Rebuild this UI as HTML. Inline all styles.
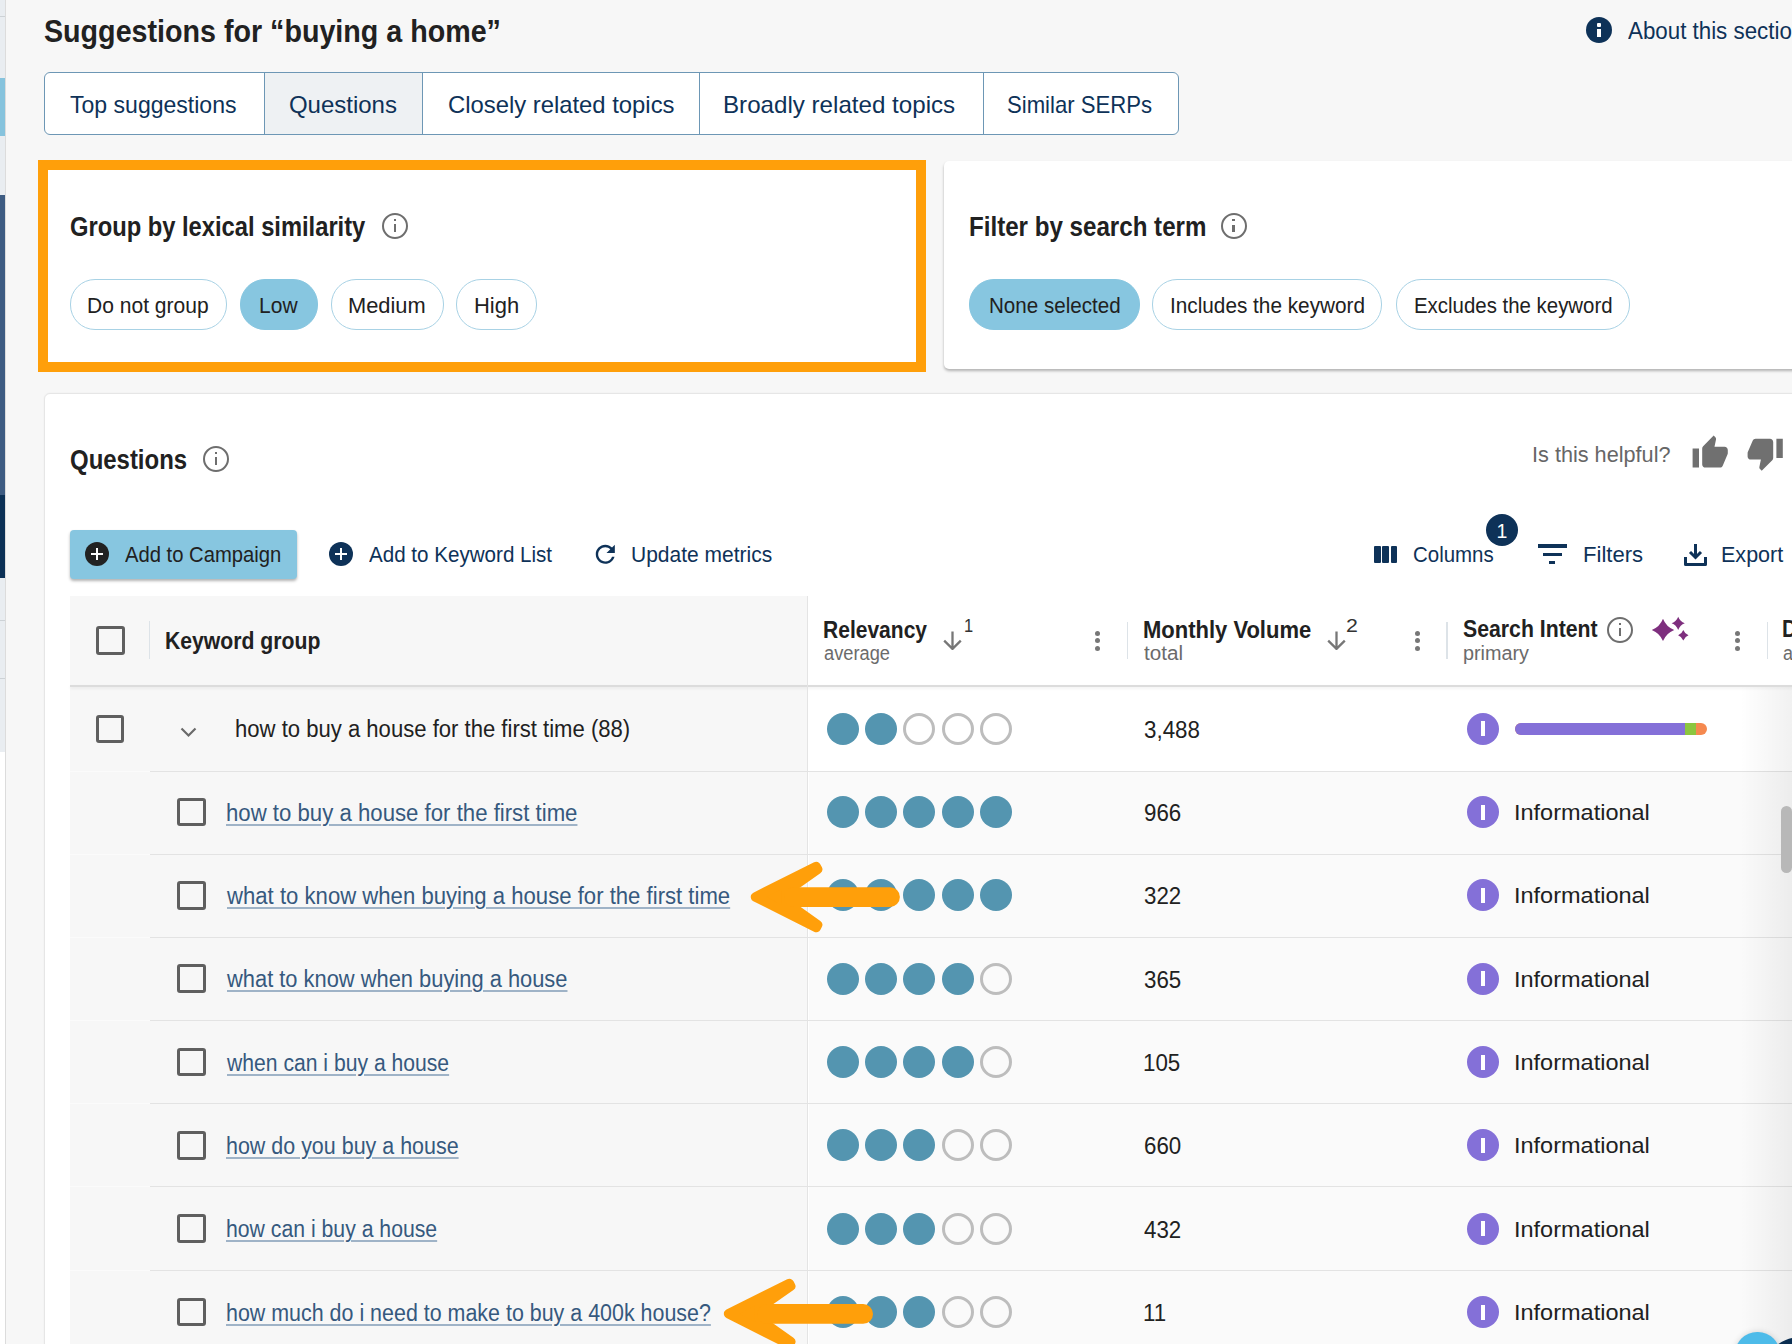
<!DOCTYPE html><html><head><meta charset="utf-8"><style>
*{box-sizing:border-box;margin:0;padding:0}
html,body{width:1792px;height:1344px;overflow:hidden}
body{background:#f7f7f7;position:relative;font-family:"Liberation Sans",sans-serif;color:#212121}
.a{position:absolute;white-space:nowrap;line-height:1;transform-origin:0 0}
.r{position:absolute}
.seg{position:absolute;left:0;width:5px}
.pill{position:absolute;height:51px;border:1.2px solid #a8d2e5;border-radius:25px;background:#fff}
.pill.on{background:#87c6e0;border-color:#87c6e0}
.info{position:absolute;width:26px;height:26px;border:2.3px solid #6e6e6e;border-radius:50%}
.info:before{content:"";position:absolute;left:9.9px;top:9.4px;width:2.4px;height:7.9px;background:#6e6e6e}
.info:after{content:"";position:absolute;left:9.9px;top:3.8px;width:2.4px;height:2.5px;background:#6e6e6e}
.cb{position:absolute;width:29px;height:29px;border:3px solid #5f5f5f;border-radius:3px}
.dot{position:absolute;width:32px;height:32px;border-radius:50%;background:#5495b0}
.dot.e{background:transparent;border:3px solid #bdbdbd}
.pi{position:absolute;width:32px;height:32px;border-radius:50%;background:#8470d8}
.pi:after{content:"";position:absolute;left:13.8px;top:8.6px;width:4.4px;height:15px;background:#fff}
.keb{position:absolute;width:5px;height:5px;border-radius:50%;background:#777}
.sep{position:absolute;width:1.5px;background:#dde3e8}
</style></head><body>
<div class="r" style="left:0;top:0;width:5px;height:1344px;background:#fff"></div>
<div class="seg" style="top:0;height:752px;background:#e9edf1"></div>
<div class="seg" style="top:16px;height:1px;background:#cdd2d6"></div>
<div class="seg" style="top:620px;height:1px;background:#cdd2d6"></div>
<div class="seg" style="top:678px;height:1px;background:#cdd2d6"></div>
<div class="seg" style="top:78px;height:58px;background:#86c3dd"></div>
<div class="seg" style="top:195px;height:300px;background:#3e5c82"></div>
<div class="seg" style="top:495px;height:83px;background:#0c3156"></div>
<div class="r" style="left:5px;top:0;width:1px;height:1344px;background:#dcdcdc"></div>
<div class="r" style="left:1585.8px;top:16.8px;width:26.4px;height:26.4px;border-radius:50%;background:#0e3258"></div>
<div class="r" style="left:1597.3px;top:23.4px;width:3.6px;height:3.2px;background:#fff;border-radius:1px"></div>
<div class="r" style="left:1597.3px;top:29px;width:3.6px;height:7.8px;background:#fff"></div>
<div class="r" style="left:44px;top:72px;width:1135px;height:63px;border:1.3px solid #6d97b5;border-radius:6px;background:#fff;overflow:hidden"><div class="r" style="left:218.5px;top:0;width:159.5px;height:62px;background:#eef1f3;border-left:1.3px solid #6d97b5;border-right:1.3px solid #6d97b5"></div><div class="r" style="left:654px;top:0;width:1.3px;height:62px;background:#6d97b5"></div><div class="r" style="left:938px;top:0;width:1.3px;height:62px;background:#6d97b5"></div></div>
<div class="r" style="left:44px;top:161px;width:878px;height:208px;background:#fff;border-radius:4px"></div>
<div class="r" style="left:38px;top:160px;width:888px;height:212px;border:10px solid #ff9f0a"></div>
<div class="r" style="left:944px;top:161px;width:900px;height:208px;background:#fff;border-radius:5px;box-shadow:0 2px 3px rgba(0,0,0,0.28)"></div>
<div class="pill" style="left:70.3px;top:278.8px;width:156.3px"></div>
<div class="pill on" style="left:240px;top:278.8px;width:77.8px"></div>
<div class="pill" style="left:331.2px;top:278.8px;width:112.4px"></div>
<div class="pill" style="left:456.2px;top:278.8px;width:80.4px"></div>
<div class="pill on" style="left:969.1px;top:278.8px;width:170.8px"></div>
<div class="pill" style="left:1152.4px;top:278.8px;width:230.0px"></div>
<div class="pill" style="left:1396.4px;top:278.8px;width:233.4px"></div>
<div class="r" style="left:43.5px;top:393.4px;width:1800px;height:1000px;background:#fff;border-radius:6px;border:1px solid #e6e6e6;box-shadow:0 0 2px rgba(0,0,0,0.05)"></div>
<div class="info" style="left:382px;top:213px"></div>
<div class="info" style="left:1220.6px;top:213.2px"></div>
<div class="info" style="left:203px;top:446px"></div>
<div class="info" style="left:1607px;top:617px"></div>
<svg class="r" style="left:1691px;top:434.4px" width="38.4" height="38.4" viewBox="0 0 24 24"><path fill="#707070" d="M1 21h4V9H1v12zm22-11c0-1.1-.9-2-2-2h-6.31l.95-4.57.03-.32c0-.41-.17-.79-.44-1.06L14.17 1 7.59 7.59C7.22 7.95 7 8.45 7 9v10c0 1.1.9 2 2 2h9c.83 0 1.54-.5 1.84-1.22l3.02-7.05c.09-.23.14-.47.14-.73v-2z"/></svg>
<svg class="r" style="left:1746px;top:434.2px" width="38.4" height="38.4" viewBox="0 0 24 24"><path fill="#707070" d="M15 3H6c-.83 0-1.54.5-1.84 1.22l-3.02 7.05c-.09.23-.14.47-.14.73v2c0 1.1.9 2 2 2h6.31l-.95 4.57-.03.32c0 .41.17.79.44 1.06L9.83 23l6.59-6.59c.36-.36.58-.86.58-1.41V5c0-1.1-.9-2-2-2zm4 0v12h4V3h-4z"/></svg>
<div class="r" style="left:70.3px;top:530.3px;width:226.3px;height:48.7px;background:#87c6e0;border-radius:4px;box-shadow:0 2px 3px rgba(0,0,0,0.3)"></div>
<div class="r" style="left:84.9px;top:542.3px;width:24px;height:24px;border-radius:50%;background:#222"></div>
<div class="r" style="left:90.9px;top:553.0999999999999px;width:12px;height:2.4px;background:#fff"></div>
<div class="r" style="left:95.7px;top:548.3px;width:2.4px;height:12px;background:#fff"></div>
<div class="r" style="left:329.1px;top:542.3px;width:24px;height:24px;border-radius:50%;background:#0e3258"></div>
<div class="r" style="left:335.1px;top:553.0999999999999px;width:12px;height:2.4px;background:#fff"></div>
<div class="r" style="left:339.90000000000003px;top:548.3px;width:2.4px;height:12px;background:#fff"></div>
<svg class="r" style="left:591px;top:539.5px" width="28.6" height="28.6" viewBox="0 0 24 24"><path fill="#0e3258" d="M17.65 6.35C16.2 4.9 14.21 4 12 4c-4.42 0-7.99 3.58-7.99 8s3.57 8 7.99 8c3.73 0 6.84-2.55 7.73-6h-2.08c-.82 2.33-3.04 4-5.65 4-3.31 0-6-2.69-6-6s2.69-6 6-6c1.66 0 3.14.69 4.22 1.78L13 11h7V4l-2.35 2.35z"/></svg>
<div class="r" style="left:1374px;top:546px;width:6.6px;height:17px;background:#0e3258;border-radius:1px"></div>
<div class="r" style="left:1382.3px;top:546px;width:6.6px;height:17px;background:#0e3258;border-radius:1px"></div>
<div class="r" style="left:1390.6px;top:546px;width:6.6px;height:17px;background:#0e3258;border-radius:1px"></div>
<div class="r" style="left:1486.2px;top:513.8px;width:32px;height:32px;border-radius:50%;background:#0e3258"></div>
<div class="r" style="left:1538px;top:544.3px;width:29px;height:3.4px;background:#0e3258"></div>
<div class="r" style="left:1542.5px;top:552.7px;width:19.5px;height:3.4px;background:#0e3258"></div>
<div class="r" style="left:1549px;top:560.7px;width:6.4px;height:3.4px;background:#0e3258"></div>
<svg class="r" style="left:1684px;top:542.5px" width="23" height="23" viewBox="0 0 23 23"><path d="M11.5 1v13M6 9l5.5 5.5L17 9" stroke="#0e3258" stroke-width="3" fill="none"/><path d="M1.5 14v7.5h20V14" stroke="#0e3258" stroke-width="3" fill="none" stroke-linejoin="round"/></svg>
<div class="r" style="left:70px;top:596px;width:737.5px;height:748px;background:#f7f7f7"></div>
<div class="r" style="left:808.5px;top:771.4px;width:990px;height:573px;background:#fafafa"></div>
<div class="r" style="left:70px;top:685px;width:1730px;height:2.2px;background:#dcdcdc;box-shadow:0 1.5px 3px rgba(0,0,0,0.07)"></div>
<div class="r" style="left:807px;top:596px;width:1.3px;height:748px;background:#e4e4e4"></div>
<div class="cb" style="left:95.6px;top:626px"></div>
<div class="sep" style="left:148.5px;top:621px;height:38px"></div>
<div class="sep" style="left:1126.6px;top:621.5px;height:37px"></div>
<div class="sep" style="left:1446.4px;top:621.5px;height:37px"></div>
<div class="sep" style="left:1766.6px;top:621.5px;height:37px"></div>
<div class="keb" style="left:1094.9px;top:630.7px"></div>
<div class="keb" style="left:1094.9px;top:638.2px"></div>
<div class="keb" style="left:1094.9px;top:645.6px"></div>
<div class="keb" style="left:1414.8px;top:630.7px"></div>
<div class="keb" style="left:1414.8px;top:638.2px"></div>
<div class="keb" style="left:1414.8px;top:645.6px"></div>
<div class="keb" style="left:1735.1px;top:630.7px"></div>
<div class="keb" style="left:1735.1px;top:638.2px"></div>
<div class="keb" style="left:1735.1px;top:645.6px"></div>
<svg class="r" style="left:943px;top:631px" width="19" height="19" viewBox="0 0 19 19"><path d="M9.5 0.5V17.5M1.2 9.6l8.3 8.3 8.3-8.3" stroke="#777" stroke-width="2.3" fill="none"/></svg>
<svg class="r" style="left:1327px;top:630.8px" width="19" height="19" viewBox="0 0 19 19"><path d="M9.5 0.5V17.5M1.2 9.6l8.3 8.3 8.3-8.3" stroke="#777" stroke-width="2.3" fill="none"/></svg>
<svg class="r" style="left:0;top:0" width="1792" height="1344"><path fill="#7e2f7e" d="M1663 618.6999999999999Q1666.136 626.764 1674.2 629.9Q1666.136 633.036 1663 641.1Q1659.864 633.036 1651.8 629.9Q1659.864 626.764 1663 618.6999999999999ZM1678.2 616.6999999999999Q1680.048 621.452 1684.8 623.3Q1680.048 625.1479999999999 1678.2 629.9Q1676.352 625.1479999999999 1671.6000000000001 623.3Q1676.352 621.452 1678.2 616.6999999999999ZM1683.3 630.0999999999999Q1684.7559999999999 633.8439999999999 1688.5 635.3Q1684.7559999999999 636.756 1683.3 640.5Q1681.844 636.756 1678.1 635.3Q1681.844 633.8439999999999 1683.3 630.0999999999999Z"/></svg>
<div class="cb" style="left:95.9px;top:714.5px;width:28.5px;height:28.5px"></div>
<svg class="r" style="left:180px;top:726px" width="17" height="12" viewBox="0 0 17 12"><path d="M1.5 2.5l7 7 7-7" stroke="#6a6a6a" stroke-width="2.2" fill="none"/></svg>
<div class="r" style="left:150px;top:771px;width:1650px;height:1.2px;background:#e3e3e3"></div>
<div class="r" style="left:70px;top:771px;width:80px;height:1.2px;background:#fbfbfb"></div>
<div class="dot" style="left:827.0px;top:712.8px"></div>
<div class="dot" style="left:865.1px;top:712.8px"></div>
<div class="dot e" style="left:903.0px;top:712.8px"></div>
<div class="dot e" style="left:942.1px;top:712.8px"></div>
<div class="dot e" style="left:980.1px;top:712.8px"></div>
<div class="pi" style="left:1467.1px;top:712.8px"></div>
<div class="dot" style="left:827.0px;top:796.0px"></div>
<div class="dot" style="left:865.1px;top:796.0px"></div>
<div class="dot" style="left:903.0px;top:796.0px"></div>
<div class="dot" style="left:942.1px;top:796.0px"></div>
<div class="dot" style="left:980.1px;top:796.0px"></div>
<div class="pi" style="left:1467.1px;top:796.0px"></div>
<div class="cb" style="left:177px;top:797.7px;width:28.6px;height:28.6px"></div>
<div class="r" style="left:150px;top:854.0px;width:1650px;height:1px;background:#e3e3e3"></div>
<div class="r" style="left:70px;top:854.0px;width:80px;height:1px;background:#fbfbfb"></div>
<div class="dot" style="left:827.0px;top:879.3px"></div>
<div class="dot" style="left:865.1px;top:879.3px"></div>
<div class="dot" style="left:903.0px;top:879.3px"></div>
<div class="dot" style="left:942.1px;top:879.3px"></div>
<div class="dot" style="left:980.1px;top:879.3px"></div>
<div class="pi" style="left:1467.1px;top:879.3px"></div>
<div class="cb" style="left:177px;top:881.0px;width:28.6px;height:28.6px"></div>
<div class="r" style="left:150px;top:937.0px;width:1650px;height:1px;background:#e3e3e3"></div>
<div class="r" style="left:70px;top:937.0px;width:80px;height:1px;background:#fbfbfb"></div>
<div class="dot" style="left:827.0px;top:962.7px"></div>
<div class="dot" style="left:865.1px;top:962.7px"></div>
<div class="dot" style="left:903.0px;top:962.7px"></div>
<div class="dot" style="left:942.1px;top:962.7px"></div>
<div class="dot e" style="left:980.1px;top:962.7px"></div>
<div class="pi" style="left:1467.1px;top:962.7px"></div>
<div class="cb" style="left:177px;top:964.4px;width:28.6px;height:28.6px"></div>
<div class="r" style="left:150px;top:1020.0px;width:1650px;height:1px;background:#e3e3e3"></div>
<div class="r" style="left:70px;top:1020.0px;width:80px;height:1px;background:#fbfbfb"></div>
<div class="dot" style="left:827.0px;top:1046.0px"></div>
<div class="dot" style="left:865.1px;top:1046.0px"></div>
<div class="dot" style="left:903.0px;top:1046.0px"></div>
<div class="dot" style="left:942.1px;top:1046.0px"></div>
<div class="dot e" style="left:980.1px;top:1046.0px"></div>
<div class="pi" style="left:1467.1px;top:1046.0px"></div>
<div class="cb" style="left:177px;top:1047.7px;width:28.6px;height:28.6px"></div>
<div class="r" style="left:150px;top:1103.0px;width:1650px;height:1px;background:#e3e3e3"></div>
<div class="r" style="left:70px;top:1103.0px;width:80px;height:1px;background:#fbfbfb"></div>
<div class="dot" style="left:827.0px;top:1129.3px"></div>
<div class="dot" style="left:865.1px;top:1129.3px"></div>
<div class="dot" style="left:903.0px;top:1129.3px"></div>
<div class="dot e" style="left:942.1px;top:1129.3px"></div>
<div class="dot e" style="left:980.1px;top:1129.3px"></div>
<div class="pi" style="left:1467.1px;top:1129.3px"></div>
<div class="cb" style="left:177px;top:1131.0px;width:28.6px;height:28.6px"></div>
<div class="r" style="left:150px;top:1186.0px;width:1650px;height:1px;background:#e3e3e3"></div>
<div class="r" style="left:70px;top:1186.0px;width:80px;height:1px;background:#fbfbfb"></div>
<div class="dot" style="left:827.0px;top:1212.7px"></div>
<div class="dot" style="left:865.1px;top:1212.7px"></div>
<div class="dot" style="left:903.0px;top:1212.7px"></div>
<div class="dot e" style="left:942.1px;top:1212.7px"></div>
<div class="dot e" style="left:980.1px;top:1212.7px"></div>
<div class="pi" style="left:1467.1px;top:1212.7px"></div>
<div class="cb" style="left:177px;top:1214.4px;width:28.6px;height:28.6px"></div>
<div class="r" style="left:150px;top:1270.0px;width:1650px;height:1px;background:#e3e3e3"></div>
<div class="r" style="left:70px;top:1270.0px;width:80px;height:1px;background:#fbfbfb"></div>
<div class="dot" style="left:827.0px;top:1296.0px"></div>
<div class="dot" style="left:865.1px;top:1296.0px"></div>
<div class="dot" style="left:903.0px;top:1296.0px"></div>
<div class="dot e" style="left:942.1px;top:1296.0px"></div>
<div class="dot e" style="left:980.1px;top:1296.0px"></div>
<div class="pi" style="left:1467.1px;top:1296.0px"></div>
<div class="cb" style="left:177px;top:1297.7px;width:28.6px;height:28.6px"></div>
<div class="r" style="left:150px;top:1353.0px;width:1650px;height:1px;background:#e3e3e3"></div>
<div class="r" style="left:70px;top:1353.0px;width:80px;height:1px;background:#fbfbfb"></div>
<div class="r" style="left:1515px;top:723px;width:192px;height:12px;border-radius:6px;overflow:hidden;background:#f5894f"><div class="r" style="left:0;top:0;width:170px;height:12px;background:#8470d8"></div><div class="r" style="left:170px;top:0;width:11px;height:12px;background:#8cc63f"></div></div>
<div class="r" style="left:1740px;top:687px;width:52px;height:657px;background:linear-gradient(to right,rgba(0,0,0,0),rgba(0,0,0,0.055))"></div>
<div class="r" style="left:1781px;top:805.5px;width:11px;height:67px;border-radius:5.5px;background:#b8b8b8"></div>
<div class="r" style="left:1735.3px;top:1331.8px;width:44.4px;height:44.4px;border-radius:50%;background:#4dbbe9;box-shadow:0 0 6px rgba(0,0,0,0.15)"></div>
<div class="r" style="left:1761.5px;top:1336.5px;width:77px;height:77px;border-radius:50%;background:#0a2d50"></div>
<div class="a" style="left:44.10px;top:15.00px;font-size:32px;font-weight:bold;color:#212121;transform:scaleX(0.8955);">Suggestions for “buying a home”</div>
<div class="a" style="left:1628.20px;top:20.00px;font-size:23.5px;font-weight:normal;color:#0e3258;transform:scaleX(0.9500);">About this section</div>
<div class="a" style="left:70.24px;top:93.00px;font-size:24px;font-weight:normal;color:#0e3258;transform:scaleX(0.9599);">Top suggestions</div>
<div class="a" style="left:288.90px;top:93.00px;font-size:24px;font-weight:normal;color:#0e3258;">Questions</div>
<div class="a" style="left:447.61px;top:93.00px;font-size:24px;font-weight:normal;color:#0e3258;transform:scaleX(0.9929);">Closely related topics</div>
<div class="a" style="left:723.49px;top:93.00px;font-size:24px;font-weight:normal;color:#0e3258;transform:scaleX(1.0061);">Broadly related topics</div>
<div class="a" style="left:1006.88px;top:93.00px;font-size:24px;font-weight:normal;color:#0e3258;transform:scaleX(0.9219);">Similar SERPs</div>
<div class="a" style="left:70.12px;top:214.00px;font-size:27px;font-weight:bold;color:#212121;transform:scaleX(0.8785);">Group by lexical similarity</div>
<div class="a" style="left:87.39px;top:295.00px;font-size:22px;font-weight:normal;color:#212121;transform:scaleX(0.9565);">Do not group</div>
<div class="a" style="left:258.99px;top:295.00px;font-size:22px;font-weight:normal;color:#212121;transform:scaleX(0.9553);">Low</div>
<div class="a" style="left:348.21px;top:295.00px;font-size:22px;font-weight:normal;color:#212121;transform:scaleX(0.9933);">Medium</div>
<div class="a" style="left:473.70px;top:295.00px;font-size:22px;font-weight:normal;color:#212121;transform:scaleX(0.9976);">High</div>
<div class="a" style="left:988.53px;top:295.00px;font-size:22px;font-weight:normal;color:#212121;transform:scaleX(0.9358);">None selected</div>
<div class="a" style="left:1169.91px;top:295.00px;font-size:22px;font-weight:normal;color:#212121;transform:scaleX(0.9438);">Includes the keyword</div>
<div class="a" style="left:1413.54px;top:295.00px;font-size:22px;font-weight:normal;color:#212121;transform:scaleX(0.9280);">Excludes the keyword</div>
<div class="a" style="left:968.81px;top:214.00px;font-size:27px;font-weight:bold;color:#212121;transform:scaleX(0.8939);">Filter by search term</div>
<div class="a" style="left:69.91px;top:447.00px;font-size:27px;font-weight:bold;color:#212121;transform:scaleX(0.8869);">Questions</div>
<div class="a" style="left:1531.77px;top:444.00px;font-size:22.5px;font-weight:normal;color:#666;transform:scaleX(0.9631);">Is this helpful?</div>
<div class="a" style="left:124.80px;top:543.00px;font-size:22.8px;font-weight:normal;color:#212121;transform:scaleX(0.8874);">Add to Campaign</div>
<div class="a" style="left:368.90px;top:543.00px;font-size:22.8px;font-weight:normal;color:#0e3258;transform:scaleX(0.9030);">Add to Keyword List</div>
<div class="a" style="left:631.36px;top:543.00px;font-size:22.8px;font-weight:normal;color:#0e3258;transform:scaleX(0.9212);">Update metrics</div>
<div class="a" style="left:1413.29px;top:544.00px;font-size:22.5px;font-weight:normal;color:#0e3258;transform:scaleX(0.9092);">Columns</div>
<div class="a" style="left:1582.74px;top:544.00px;font-size:22.5px;font-weight:normal;color:#0e3258;transform:scaleX(0.9810);">Filters</div>
<div class="a" style="left:1721.39px;top:544.00px;font-size:22.5px;font-weight:normal;color:#0e3258;transform:scaleX(0.9571);">Export</div>
<div class="a" style="left:1496.50px;top:522.00px;font-size:19.5px;font-weight:normal;color:#fff;">1</div>
<div class="a" style="left:165.38px;top:630.00px;font-size:23.3px;font-weight:bold;color:#212121;transform:scaleX(0.9095);">Keyword group</div>
<div class="a" style="left:822.69px;top:619.00px;font-size:23.3px;font-weight:bold;color:#212121;transform:scaleX(0.9027);">Relevancy</div>
<div class="a" style="left:823.56px;top:644.00px;font-size:19.5px;font-weight:normal;color:#6b6b6b;transform:scaleX(0.9362);">average</div>
<div class="a" style="left:1142.51px;top:619.00px;font-size:23.3px;font-weight:bold;color:#212121;transform:scaleX(0.9440);">Monthly Volume</div>
<div class="a" style="left:1144.40px;top:644.00px;font-size:19.5px;font-weight:normal;color:#6b6b6b;transform:scaleX(1.0583);">total</div>
<div class="a" style="left:1463.09px;top:618.00px;font-size:23.3px;font-weight:bold;color:#212121;transform:scaleX(0.9123);">Search Intent</div>
<div class="a" style="left:1463.38px;top:644.00px;font-size:19.5px;font-weight:normal;color:#6b6b6b;transform:scaleX(1.0156);">primary</div>
<div class="a" style="left:1782.40px;top:618.00px;font-size:23.3px;font-weight:bold;color:#212121;transform:scaleX(0.9000);">D</div>
<div class="a" style="left:1783.48px;top:644.00px;font-size:19.5px;font-weight:normal;color:#6b6b6b;transform:scaleX(0.9200);">a</div>
<div class="a" style="left:964.33px;top:616.00px;font-size:19px;font-weight:normal;color:#333;transform:scaleX(0.8667);">1</div>
<div class="a" style="left:1346.18px;top:616.00px;font-size:19px;font-weight:normal;color:#333;transform:scaleX(1.1222);">2</div>
<div class="a" style="left:235.28px;top:718.00px;font-size:23px;font-weight:normal;color:#212121;transform:scaleX(0.9600);">how to buy a house for the first time (88)</div>
<div class="a" style="left:1143.93px;top:719.00px;font-size:23px;font-weight:normal;color:#212121;transform:scaleX(0.9714);">3,488</div>
<div class="a" style="left:226.04px;top:802.00px;font-size:23px;font-weight:normal;color:#36597e;transform:scaleX(0.9646);text-decoration:underline;text-decoration-color:#9fb3c7;text-decoration-thickness:1.7px;text-underline-offset:3px;">how to buy a house for the first time</div>
<div class="a" style="left:1143.93px;top:802.00px;font-size:23px;font-weight:normal;color:#212121;transform:scaleX(0.9700);">966</div>
<div class="a" style="left:1513.94px;top:801.00px;font-size:22.8px;font-weight:normal;color:#212121;transform:scaleX(1.0305);">Informational</div>
<div class="a" style="left:227.00px;top:885.00px;font-size:23px;font-weight:normal;color:#36597e;transform:scaleX(0.9623);text-decoration:underline;text-decoration-color:#9fb3c7;text-decoration-thickness:1.7px;text-underline-offset:3px;">what to know when buying a house for the first time</div>
<div class="a" style="left:1143.93px;top:885.00px;font-size:23px;font-weight:normal;color:#212121;transform:scaleX(0.9700);">322</div>
<div class="a" style="left:1513.94px;top:884.00px;font-size:22.8px;font-weight:normal;color:#212121;transform:scaleX(1.0305);">Informational</div>
<div class="a" style="left:227.00px;top:968.00px;font-size:23px;font-weight:normal;color:#36597e;transform:scaleX(0.9510);text-decoration:underline;text-decoration-color:#9fb3c7;text-decoration-thickness:1.7px;text-underline-offset:3px;">what to know when buying a house</div>
<div class="a" style="left:1143.93px;top:969.00px;font-size:23px;font-weight:normal;color:#212121;transform:scaleX(0.9700);">365</div>
<div class="a" style="left:1513.94px;top:968.00px;font-size:22.8px;font-weight:normal;color:#212121;transform:scaleX(1.0305);">Informational</div>
<div class="a" style="left:227.00px;top:1052.00px;font-size:23px;font-weight:normal;color:#36597e;transform:scaleX(0.9191);text-decoration:underline;text-decoration-color:#9fb3c7;text-decoration-thickness:1.7px;text-underline-offset:3px;">when can i buy a house</div>
<div class="a" style="left:1142.96px;top:1052.00px;font-size:23px;font-weight:normal;color:#212121;transform:scaleX(0.9700);">105</div>
<div class="a" style="left:1513.94px;top:1051.00px;font-size:22.8px;font-weight:normal;color:#212121;transform:scaleX(1.0305);">Informational</div>
<div class="a" style="left:226.07px;top:1135.00px;font-size:23px;font-weight:normal;color:#36597e;transform:scaleX(0.9328);text-decoration:underline;text-decoration-color:#9fb3c7;text-decoration-thickness:1.7px;text-underline-offset:3px;">how do you buy a house</div>
<div class="a" style="left:1143.93px;top:1135.00px;font-size:23px;font-weight:normal;color:#212121;transform:scaleX(0.9700);">660</div>
<div class="a" style="left:1513.94px;top:1134.00px;font-size:22.8px;font-weight:normal;color:#212121;transform:scaleX(1.0305);">Informational</div>
<div class="a" style="left:226.08px;top:1218.00px;font-size:23px;font-weight:normal;color:#36597e;transform:scaleX(0.9225);text-decoration:underline;text-decoration-color:#9fb3c7;text-decoration-thickness:1.7px;text-underline-offset:3px;">how can i buy a house</div>
<div class="a" style="left:1143.93px;top:1219.00px;font-size:23px;font-weight:normal;color:#212121;transform:scaleX(0.9700);">432</div>
<div class="a" style="left:1513.94px;top:1218.00px;font-size:22.8px;font-weight:normal;color:#212121;transform:scaleX(1.0305);">Informational</div>
<div class="a" style="left:226.07px;top:1302.00px;font-size:23px;font-weight:normal;color:#36597e;transform:scaleX(0.9317);text-decoration:underline;text-decoration-color:#9fb3c7;text-decoration-thickness:1.7px;text-underline-offset:3px;">how much do i need to make to buy a 400k house?</div>
<div class="a" style="left:1142.96px;top:1302.00px;font-size:23px;font-weight:normal;color:#212121;transform:scaleX(0.9700);">11</div>
<div class="a" style="left:1513.94px;top:1301.00px;font-size:22.8px;font-weight:normal;color:#212121;transform:scaleX(1.0305);">Informational</div>
<svg class="r" style="left:0;top:0" width="1792" height="1344"><path d="M755.5 896.9L816.2 866.6L817.6 869.3L786.0 891.5L786.0 902.5L817.6 924.9L816.2 927.6Z" fill="#ff9f0a" stroke="#ff9f0a" stroke-width="9.5" stroke-linejoin="round"/><path d="M794.0 897.1L890.0 897.1" stroke="#ff9f0a" stroke-width="19.8" stroke-linecap="round"/><path d="M728.6 1313.7L789.3 1283.4L790.7 1286.1L759.1 1308.3L759.1 1319.3L790.7 1341.7L789.3 1344.4Z" fill="#ff9f0a" stroke="#ff9f0a" stroke-width="9.5" stroke-linejoin="round"/><path d="M767.1 1313.9L863.1 1313.9" stroke="#ff9f0a" stroke-width="19.8" stroke-linecap="round"/></svg>
</body></html>
